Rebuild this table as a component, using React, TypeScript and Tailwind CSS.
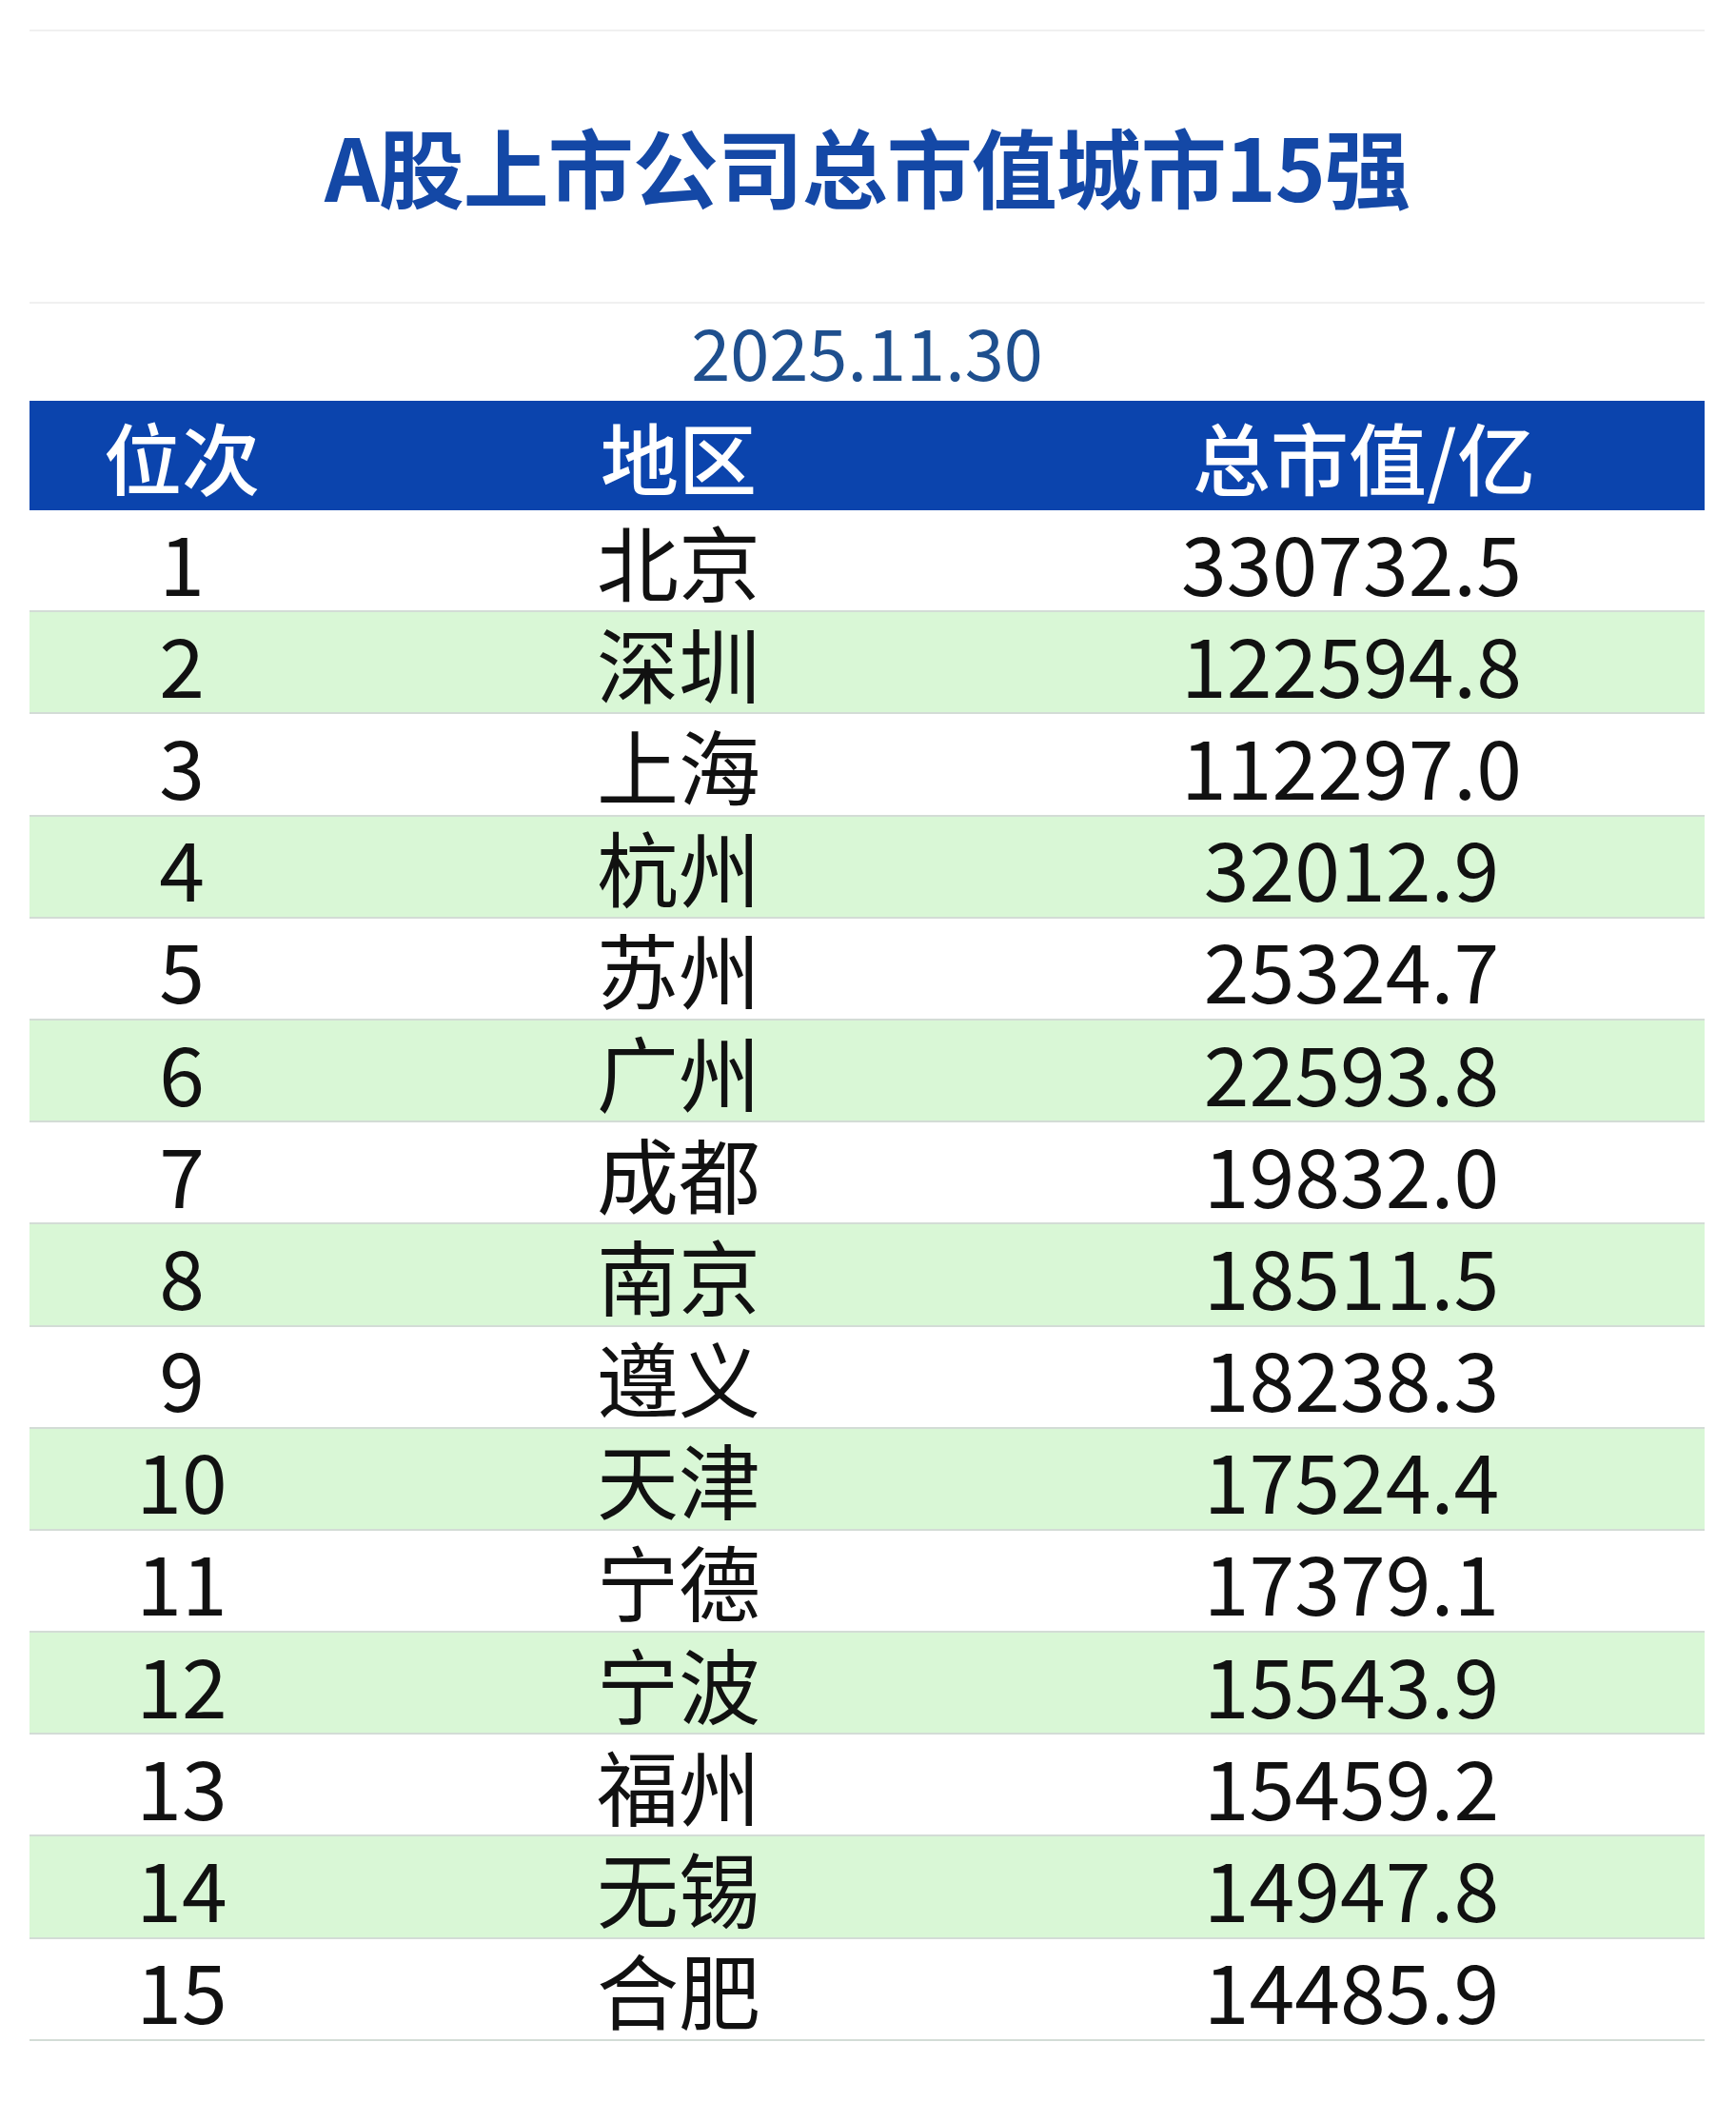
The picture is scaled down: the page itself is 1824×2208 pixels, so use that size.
import React from "react";

const rows = [
  { rank: 1, city: "北京", value: "330732.5" },
  { rank: 2, city: "深圳", value: "122594.8" },
  { rank: 3, city: "上海", value: "112297.0" },
  { rank: 4, city: "杭州", value: "32012.9" },
  { rank: 5, city: "苏州", value: "25324.7" },
  { rank: 6, city: "广州", value: "22593.8" },
  { rank: 7, city: "成都", value: "19832.0" },
  { rank: 8, city: "南京", value: "18511.5" },
  { rank: 9, city: "遵义", value: "18238.3" },
  { rank: 10, city: "天津", value: "17524.4" },
  { rank: 11, city: "宁德", value: "17379.1" },
  { rank: 12, city: "宁波", value: "15543.9" },
  { rank: 13, city: "福州", value: "15459.2" },
  { rank: 14, city: "无锡", value: "14947.8" },
  { rank: 15, city: "合肥", value: "14485.9" },
];

const font = { fontFamily: '"Noto Sans CJK SC", "Noto Sans", sans-serif' };

export default function App() {
  return (
    <div className="min-h-[2208px] w-[1824px] bg-white pt-[31px]" style={font}>
      <div className="ml-[31px] w-[1760px]">
        {/* Title */}
        <div className="flex h-[288px] items-center justify-center border-y-2 border-[#f0f0f0] pb-1">
          <h1 className="text-[90px] font-bold leading-none tracking-[-1px] text-[#1448a6]">
            A股上市公司总市值城市15强
          </h1>
        </div>

        {/* Date */}
        <div className="flex h-[102px] items-center justify-center pb-1">
          <span className="text-[74px] leading-none text-[#1e4f8e]">2025.11.30</span>
        </div>

        {/* Header */}
        <div className="grid h-[115px] grid-cols-[320px_724px_716px] items-center bg-[#0b44ad] text-[82px] font-medium leading-none text-white">
          <div className="text-center">位次</div>
          <div className="text-center">地区</div>
          <div className="text-center">总市值/亿</div>
        </div>

        {/* Rows */}
        {rows.map((r, i) => (
          <div
            key={r.rank}
            className={
              "grid h-[107.2px] grid-cols-[320px_724px_716px] items-center border-b-2 border-[#d3dcd6] text-[86px] leading-none text-[#111] " +
              (i % 2 === 1 ? "bg-[#d9f7d6]" : "bg-white")
            }
          >
            <div className="text-center">{r.rank}</div>
            <div className="text-center">{r.city}</div>
            <div className="pr-[26px] text-center">{r.value}</div>
          </div>
        ))}
      </div>
    </div>
  );
}
